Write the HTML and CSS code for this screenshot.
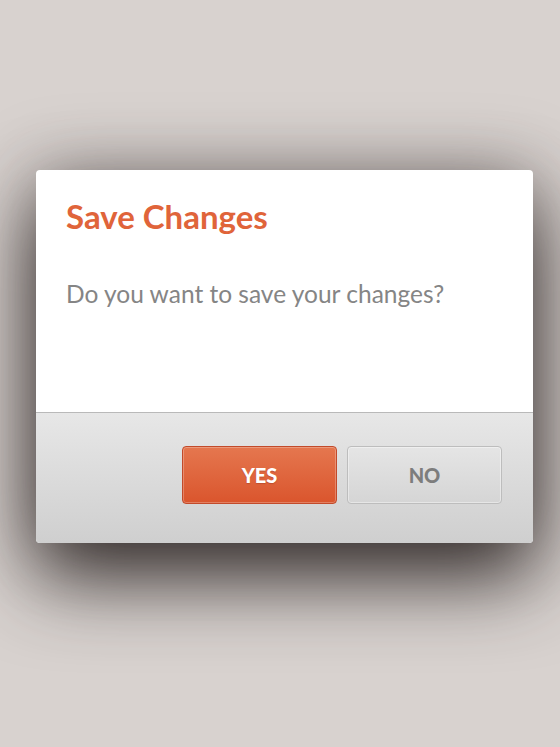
FILE: index.html
```html
<!DOCTYPE html>
<html>
<head>
<meta charset="utf-8">
<link rel="stylesheet" href="styles.css">
</head>
<body>
<div class="screen">
  <div class="dialog">
    <div class="content">
      <h1 class="title">Save Changes</h1>
      <p class="message">Do you want to save your changes?</p>
    </div>
    <div class="footer">
      <button class="btn btn-yes">YES</button>
      <button class="btn btn-no">NO</button>
    </div>
  </div>
</div>
</body>
</html>
```
FILE: styles.css
```css
html, body {
  margin: 0;
  padding: 0;
  width: 560px;
  height: 747px;
  overflow: hidden;
}
body {
  background: #d8d2cf;
  font-family: Lato, "Open Sans", sans-serif;
}
.screen {
  box-sizing: border-box;
  height: 747px;
  padding: 170px 27px 0 36px;
}
.dialog {
  width: 497px;
  height: 373px;
  border-radius: 4px;
  background: #fff;
  display: flex;
  flex-direction: column;
  overflow: hidden;
  box-shadow: 0 35px 80px rgba(30, 24, 22, 0.85), 0 0 70px rgba(60, 50, 48, 0.35);
}
.content {
  height: 243px;
  box-sizing: border-box;
  padding: 28px 30px 0 30px;
  border-bottom: 1px solid #b9b9b9;
}
.title {
  margin: 0;
  font-size: 33px;
  font-weight: 700;
  color: #e0643a;
  line-height: 36px;
}
.message {
  margin: 45px 0 0 0;
  font-size: 24.5px;
  font-weight: 400;
  color: #858585;
  line-height: 30px;
}
.footer {
  flex: 1;
  background: linear-gradient(#e7e7e7, #cfcfcf);
  display: flex;
  justify-content: flex-end;
  align-items: flex-start;
  padding: 33px 31px 0 0;
  gap: 10px;
}
.btn {
  width: 155px;
  height: 58px;
  border-radius: 4px;
  font-family: Lato, "Open Sans", sans-serif;
  font-size: 20px;
  font-weight: 900;
  padding: 0;
  box-sizing: border-box;
}
.btn-yes {
  color: #fff;
  background: linear-gradient(#e5774f, #da552d);
  border: 1px solid #c24a2a;
  box-shadow: inset 0 0 0 1px rgba(255, 255, 255, 0.25);
  text-shadow: 0 1px 1px rgba(120, 40, 20, 0.3);
}
.btn-no {
  color: #7d7d7d;
  background: linear-gradient(#e5e5e5, #d5d5d5);
  border: 1px solid #bdbdbd;
  box-shadow: inset 0 0 0 1px rgba(255, 255, 255, 0.4);
}
```
